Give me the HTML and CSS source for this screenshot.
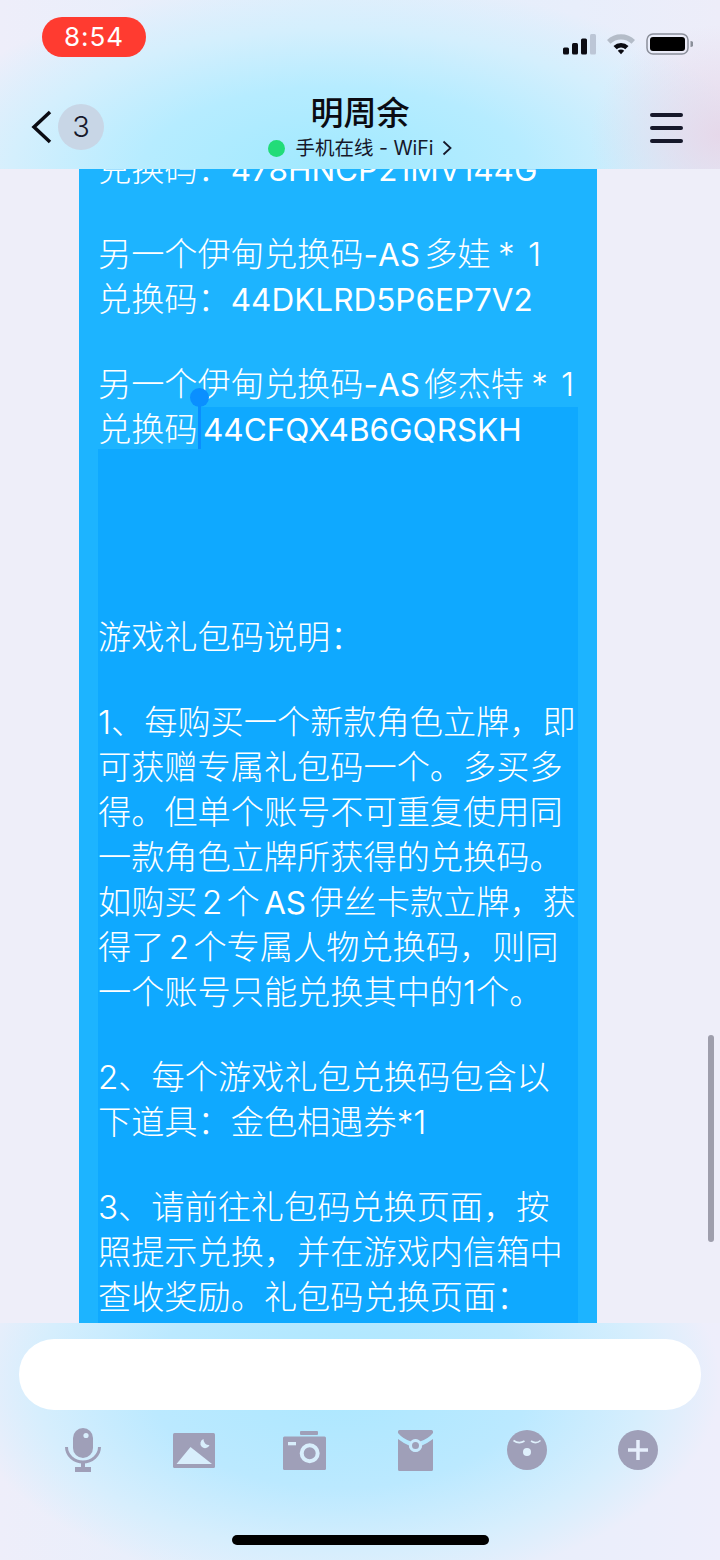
FILE: index.html
```html
<!DOCTYPE html>
<html>
<head>
    <title>明周余</title>
    <link rel="stylesheet" href="styles.css">
</head>
<body>
    <div class="phone">
        <div class="top-bar">
            <div class="status-bar">
                <div class="time-pill">8:54</div>
                <div class="status-icons">
                    <svg width="33" height="21" viewBox="0 0 33 21">
                        <rect x="0" y="13.500" width="6" height="7" rx="1.500" fill="#0b0b12"/>
                        <rect x="9" y="9" width="6" height="11.500" rx="1.500" fill="#0b0b12"/>
                        <rect x="18" y="4.500" width="6" height="16" rx="1.500" fill="#0b0b12"/>
                        <rect x="27" y="0" width="6" height="20.500" rx="1.500" fill="#bcc6d6"/>
                    </svg>
                    <svg width="30" height="22" viewBox="0 0 30 22">
                        <path d="M1 7 A20 20 0 0 1 29 7 L25.500 10.700 A15 15 0 0 0 4.500 10.700 Z" fill="#b4bcc8"/>
                        <path d="M7.500 13 A11 11 0 0 1 22.500 13 L19.300 16.200 A6.500 6.500 0 0 0 10.700 16.200 Z" fill="#0b0b12"/>
                        <path d="M11.800 17.800 A4.500 4.500 0 0 1 18.200 17.800 L15 21.200 Z" fill="#0b0b12"/>
                    </svg>
                    <svg width="47" height="22" viewBox="0 0 47 22">
                        <rect x="1" y="1" width="41" height="20" rx="6" fill="none" stroke="#8b8f9a" stroke-width="1.500"/>
                        <rect x="4" y="4" width="35" height="14" rx="3" fill="#000"/>
                        <path d="M44.500 8 a3 3 0 0 1 0 6 Z" fill="#8b8f9a"/>
                    </svg>
                </div>
            </div>
            <div class="nav-bar">
                <div class="nav-left">
                    <svg width="22" height="34" viewBox="0 0 22 34">
                        <path d="M19 2 L3 17 L19 32" fill="none" stroke="#0b0b12" stroke-width="3.500"/>
                    </svg>
                    <div class="unread">3</div>
                </div>
                <div class="nav-title">
                    <div class="name">明周余</div>
                    <div class="online">
                        <span class="dot"></span>
                        <span>手机在线 - WiFi</span>
                        <svg width="10" height="16" viewBox="0 0 10 16">
                            <path d="M1.500 1.500 L8.500 8 L1.500 14.500" fill="none" stroke="#16182a" stroke-width="1.800"/>
                        </svg>
                    </div>
                </div>
                <div class="menu-btn">
                    <span></span><span></span><span></span>
                </div>
            </div>
        </div>

        <div class="messages">
            <div class="bubble">
                <div class="line">兑换码：<span class="latin">478HNCP21MV144G</span></div>
                <div class="gap"></div>
                <div class="line">另一个伊甸兑换码<span class="latin">-AS</span> 多娃 <span class="mult">* 1</span></div>
                <div class="line">兑换码：<span class="latin">44DKLRD5P6EP7V2</span></div>
                <div class="gap"></div>
                <div class="line">另一个伊甸兑换码<span class="latin">-AS</span> 修杰特 <span class="mult">* 1</span></div>
                <div class="sel-row">
                    <span class="sel-before">兑换码</span><span class="sel-after"><span class="latin">44CFQX4B6GQRSKH</span></span>
                    <span class="caret"></span>
                </div>
                <div class="selected">
                    <div class="big-gap"></div>
                    <div class="line">游戏礼包码说明：</div>
                    <div class="gap"></div>
                    <div class="line">1、每购买一个新款角色立牌，即</div>
                    <div class="line">可获赠专属礼包码一个。多买多</div>
                    <div class="line">得。但单个账号不可重复使用同</div>
                    <div class="line">一款角色立牌所获得的兑换码。</div>
                    <div class="line">如购买 2 个 <span class="latin">AS</span> 伊丝卡款立牌，获</div>
                    <div class="line">得了 2 个专属人物兑换码，则同</div>
                    <div class="line">一个账号只能兑换其中的1个。</div>
                    <div class="gap"></div>
                    <div class="line">2、每个游戏礼包兑换码包含以</div>
                    <div class="line">下道具：金色相遇券*1</div>
                    <div class="gap"></div>
                    <div class="line">3、请前往礼包码兑换页面，按</div>
                    <div class="line">照提示兑换，并在游戏内信箱中</div>
                    <div class="line">查收奖励。礼包码兑换页面：</div>
                </div>
            </div>
            <div class="scrollbar"></div>
        </div>

        <div class="bottom-bar">
            <div class="input-box"></div>
            <div class="tools">
                <svg width="36" height="44" viewBox="0 0 36 44">
                    <rect x="8" y="0" width="20" height="30" rx="10" fill="#9f9fb8"/>
                    <circle cx="21" cy="7.500" r="2.600" fill="#d8eefc"/>
                    <path d="M1.500 19 a16.500 15 0 0 0 33 0" fill="none" stroke="#9f9fb8" stroke-width="3"/>
                    <rect x="16" y="33" width="4" height="6" fill="#9f9fb8"/>
                    <rect x="10" y="39" width="16" height="5" fill="#9f9fb8"/>
                </svg>
                <svg width="42" height="35" viewBox="0 0 42 35">
                    <rect x="0" y="0" width="42" height="35" rx="1.500" fill="#9f9fb8"/>
                    <path d="M3.500 31 L17.500 14 L39 31 Z" fill="#d8eefc"/>
                    <path d="M30.500 6 a4.700 4.700 0 1 0 6 6 a5.500 5.500 0 0 1 -6 -6 Z" fill="#d8eefc"/>
                </svg>
                <svg width="43" height="39" viewBox="0 0 43 39">
                    <rect x="17" y="0" width="18" height="4" rx="1" fill="#9f9fb8"/>
                    <rect x="0" y="5.500" width="43" height="33.500" rx="1.500" fill="#9f9fb8"/>
                    <rect x="5" y="11" width="8" height="3.300" fill="#d8eefc"/>
                    <circle cx="26.700" cy="22.300" r="8" fill="none" stroke="#d8eefc" stroke-width="4"/>
                </svg>
                <svg width="35" height="41" viewBox="0 0 35 41">
                    <path d="M0 1.500 Q0 0 1.500 0 H33.500 Q35 0 35 1.500 V3 Q30 9 22 11.500 A6 6 0 0 0 13 11.500 Q5 9 0 3 Z" fill="#9f9fb8"/>
                    <path d="M0 9 Q6 13.500 11 15.500 A6.500 6.500 0 0 0 24 15.500 Q29 13.500 35 9 V39.500 Q35 41 33.500 41 H1.500 Q0 41 0 39.500 Z" fill="#9f9fb8"/>
                    <circle cx="17.500" cy="15.500" r="5" fill="#9f9fb8" stroke="#c8e9fd" stroke-width="3"/>
                </svg>
                <svg width="40" height="40" viewBox="0 0 40 40">
                    <circle cx="20" cy="20" r="20" fill="#9f9fb8"/>
                    <path d="M6.500 10.500 q5.500 4 11 0.500 M24 11 q5 3.500 9.500 -0.500" fill="none" stroke="#dff0fc" stroke-width="1.600"/>
                    <circle cx="20" cy="22" r="4" fill="#dff0fc"/>
                </svg>
                <svg width="40" height="40" viewBox="0 0 40 40">
                    <circle cx="20" cy="20" r="20" fill="#9f9fb8"/>
                    <path d="M20 10 V30 M10 20 H30" fill="none" stroke="#e6effc" stroke-width="3.500"/>
                </svg>
            </div>
            <div class="home-bar"></div>
        </div>
    </div>
</body>
</html>
```

FILE: styles.css
```css
html, body { margin: 0; padding: 0; }
body { width: 720px; height: 1560px; overflow: hidden; font-family: Inter, "Noto Sans CJK SC", sans-serif; background: #eeeef9; }
.phone { display: flex; flex-direction: column; height: 1560px; position: relative; }

.top-bar { height: 169px; flex: none; background: radial-gradient(ellipse 130px 110px at 720px 135px, rgba(230, 214, 232, 0.9) 0%, rgba(230, 214, 232, 0) 100%), radial-gradient(ellipse 430px 190px at 335px 172px, #9fe9ff 0%, #b6ecff 45%, #d4effd 75%, rgba(228, 238, 252, 0) 100%), linear-gradient(90deg, #eeeefa 0%, #e2effc 45%, #e8eefb 80%, #ededf9 100%); position: relative; z-index: 2; }
.status-bar { height: 78px; display: flex; justify-content: space-between; padding: 17px 27px 0 42px; box-sizing: border-box; }
.time-pill { width: 104px; height: 40px; border-radius: 20px; background: #ff3b30; color: #fff; font-size: 26px; line-height: 40px; text-align: center; letter-spacing: 1px; }
.status-icons { display: flex; align-items: center; gap: 10px; height: 54px; }

.nav-bar { display: grid; grid-template-columns: 1fr auto 1fr; align-items: start; padding: 0 37px; }
.nav-left { display: flex; align-items: center; gap: 5px; margin: 26px 0 0 -6px; }
.unread { width: 46px; height: 46px; border-radius: 50%; background: #c8d6e6; color: #16182a; font-size: 29px; font-weight: 300; line-height: 46px; text-align: center; }
.nav-title { text-align: center; }
.name { font-size: 33px; line-height: 40px; margin-top: 15px; font-weight: 500; color: #0b0b12; }
.online { display: flex; align-items: center; justify-content: center; gap: 8px; font-size: 19.500px; line-height: 28px; margin-top: 1px; color: #16182a; }
.dot { width: 17px; height: 17px; border-radius: 50%; background: #22dc78; margin-right: 2px; }
.menu-btn { display: flex; flex-direction: column; gap: 9px; margin-top: 35px; justify-self: end; }
.menu-btn span { display: block; width: 33px; height: 4px; border-radius: 2px; background: #16182a; }

.messages { flex: 1; overflow: hidden; position: relative; background: #eeeef9; }
.bubble { width: 518px; margin: -22px 0 0 79px; padding: 0 19px; box-sizing: border-box; background: #1db4ff; color: #fff; font-size: 33.200px; font-weight: 300; word-spacing: -5px; }
.latin { font-size: 31.500px; font-weight: 400; }
.mult { word-spacing: 4px; margin-left: 3px; }
.line { height: 45px; line-height: 45px; white-space: nowrap; }
.gap { height: 40px; }
.big-gap { height: 166px; }
.sel-row { display: flex; height: 42px; line-height: 45px; position: relative; white-space: nowrap; }
.sel-before { width: 101px; }
.sel-after { flex: 1; background: #0fa9ff; padding-left: 4px; }
.selected { background: #0fa9ff; height: 900px; }
.caret { position: absolute; left: 100px; top: -10px; width: 3px; height: 52px; background: #0a8fff; }
.caret::before { content: ""; position: absolute; left: -8px; top: -9px; width: 19px; height: 19px; border-radius: 50%; background: #0a8fff; }
.scrollbar { position: absolute; right: 6px; top: 866px; width: 6px; height: 207px; border-radius: 3px; background: #9e9eac; }

.bottom-bar { height: 237px; flex: none; background: radial-gradient(ellipse 380px 210px at 340px 60px, #abe7ff 0%, #bbe9ff 50%, #d6eefd 80%, rgba(228, 238, 252, 0) 100%), linear-gradient(90deg, #eeeefa 0%, #e4effc 35%, #e8eefb 70%, #eeeefb 100%); position: relative; z-index: 2; padding-top: 16px; box-sizing: border-box; }
.input-box { height: 71px; margin: 0 19px; border-radius: 35px; background: #fff; }
.tools { display: grid; grid-template-columns: repeat(6, 111px); justify-items: center; align-items: center; margin-top: 18px; padding-left: 27px; }
.home-bar { position: absolute; left: 232px; bottom: 15px; width: 257px; height: 10px; border-radius: 5px; background: #000; }
```
